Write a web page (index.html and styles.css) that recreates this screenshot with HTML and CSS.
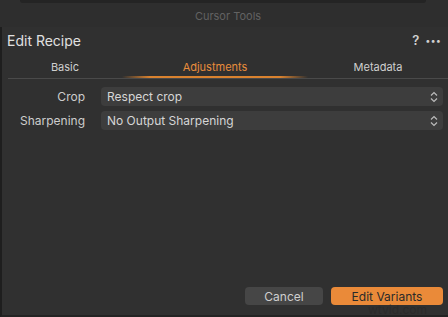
FILE: index.html
```html
<!DOCTYPE html>
<html lang="en">

<head>
    <meta charset="UTF-8">
    <title>Edit Recipe</title>
    <link rel="stylesheet" href="styles.css">
</head>

<body>
    <div class="wrapper">
        <div class="top-panel"></div>
        <div class="panel-title">Cursor Tools</div>
        <div class="dialog">
            <div class="header">
                <div class="title">Edit Recipe</div>
                <div class="actions">
                    <span class="help">?</span>
                    <span class="more">&middot;&middot;&middot;</span>
                </div>
            </div>
            <div class="tabs">
                <div class="tab">Basic</div>
                <div class="tab active">Adjustments</div>
                <div class="tab">Metadata</div>
            </div>
            <div class="form">
                <div class="row">
                    <div class="label">Crop</div>
                    <div class="select">
                        <span>Respect crop</span>
                        <svg class="arrows" width="8" height="12" viewBox="0 0 8 12">
                            <path d="M1 4.5 L4 1.5 L7 4.5 M1 7.5 L4 10.5 L7 7.5" fill="none" stroke="#bbb" stroke-width="1.2"/>
                        </svg>
                    </div>
                </div>
                <div class="row">
                    <div class="label">Sharpening</div>
                    <div class="select">
                        <span>No Output Sharpening</span>
                        <svg class="arrows" width="8" height="12" viewBox="0 0 8 12">
                            <path d="M1 4.5 L4 1.5 L7 4.5 M1 7.5 L4 10.5 L7 7.5" fill="none" stroke="#bbb" stroke-width="1.2"/>
                        </svg>
                    </div>
                </div>
            </div>
            <div class="bottom">
                <button class="cancel">Cancel</button>
                <button class="primary">Edit Variants</button>
            </div>
        </div>
        <div class="watermark">wtvid.com</div>
    </div>
</body>

</html>
```

FILE: styles.css
```css
body {
    margin: 0;
    font-family: "Inter", "Liberation Sans", sans-serif;
    color: #d8d8d8;
}

.wrapper {
    position: relative;
    width: 448px;
    height: 317px;
    background-color: #2e2e2e;
    display: flex;
    flex-direction: column;
    overflow: hidden;
}

.top-panel {
    margin: 0 22px 0 20px;
    height: 3px;
    background-color: #242424;
    border-radius: 0 0 6px 6px;
}

.panel-title {
    height: 24px;
    display: flex;
    justify-content: center;
    align-items: center;
    padding: 2px 0 0 8px;
    box-sizing: border-box;
    font-size: 11px;
    color: #626262;
}

.dialog {
    flex: 1;
    display: flex;
    flex-direction: column;
    background-color: #303030;
    border-left: 2px solid #1e1e1e;
    border-bottom: 2px solid #232323;
}

.header {
    height: 26px;
    display: flex;
    justify-content: space-between;
    align-items: center;
    padding: 0 7px 0 5px;
}

.title {
    font-size: 14px;
    color: #e0e0e0;
}

.actions {
    display: flex;
    align-items: center;
    gap: 6px;
    font-size: 13px;
    font-weight: 600;
    color: #d0d0d0;
}

.more {
    font-size: 14px;
    font-weight: 900;
}

.tabs {
    height: 25px;
    margin-left: 6px;
    display: flex;
    border-bottom: 1px solid #4a4a4a;
}

.tab {
    flex: 1;
    display: flex;
    justify-content: center;
    align-items: center;
    padding-top: 3px;
    font-size: 11px;
    color: #cfcfcf;
}

.tab:first-child {
    flex: 0 0 114px;
}

.tab.active {
    flex: 0 0 186px;
    color: #e98d3c;
    background: linear-gradient(90deg, transparent, #d9822f 15%, #d9822f 85%, transparent) bottom / 100% 2px no-repeat;
}

.form {
    display: flex;
    flex-direction: column;
    gap: 5px;
    padding: 8px 5px 0 0;
}

.row {
    display: flex;
    align-items: center;
    gap: 16px;
}

.label {
    width: 83px;
    text-align: right;
    font-size: 12px;
    color: #cdcdcd;
}

.select {
    flex: 1;
    height: 19px;
    display: flex;
    justify-content: space-between;
    align-items: center;
    padding: 0 5px 0 6px;
    border-radius: 4px;
    background-color: #3d3d3d;
    font-size: 12px;
    color: #d6d6d6;
}

.bottom {
    margin-top: auto;
    display: flex;
    justify-content: flex-end;
    gap: 8px;
    padding: 0 5px 10px 0;
}

button {
    height: 18px;
    border: none;
    border-radius: 4px;
    font-family: inherit;
    font-size: 12px;
    padding: 0;
}

.cancel {
    width: 78px;
    background-color: #464646;
    color: #cfcfcf;
}

.primary {
    width: 112px;
    background-color: #ea8a39;
    color: #2a2a2a;
}

.watermark {
    position: absolute;
    left: 368px;
    top: 304px;
    font-size: 12px;
    line-height: 11px;
    color: #2a2a2a;
}
```
